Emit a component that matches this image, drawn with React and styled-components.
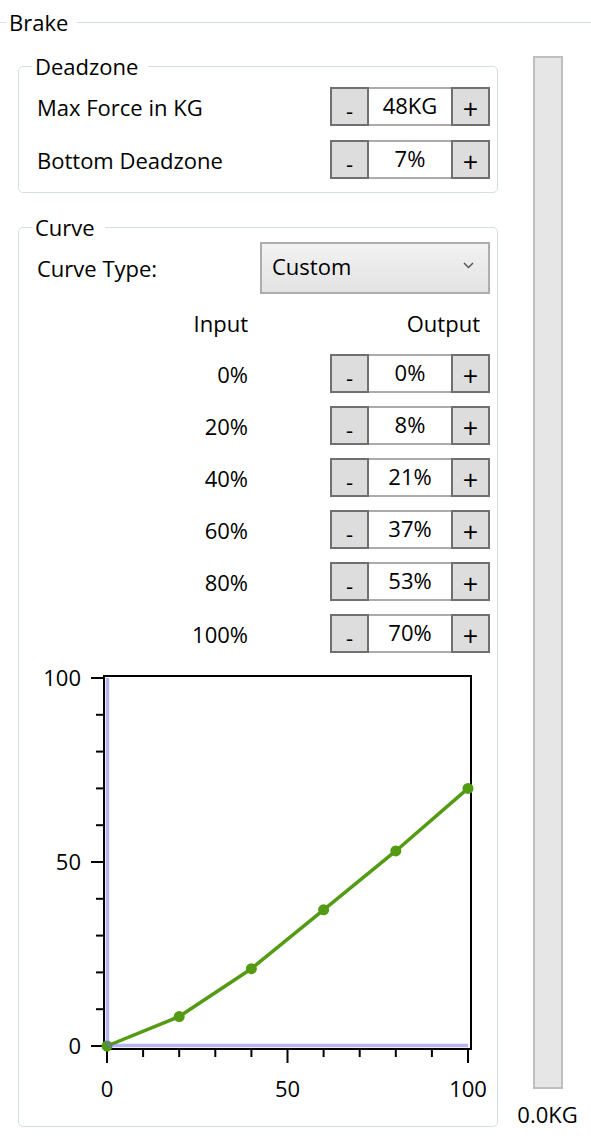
import React from "react";
import styled, { createGlobalStyle } from "styled-components";

const Global = createGlobalStyle`
  html, body { margin: 0; padding: 0; background: #ffffff; }
  body { font-family: "Open Sans", "Noto Sans", sans-serif; color: #000; }
`;

const Page = styled.div`
  width: 591px;
  height: 1143px;
  overflow: hidden;
  box-sizing: border-box;
  padding-top: 9px;
`;

const BrakeSet = styled.fieldset`
  margin: 0 0 0 -2px;
  padding: 18px 0 0 20px;
  border: none;
  border-top: 1.5px solid #d5dee3;
  min-inline-size: 0;
`;

const BrakeLegend = styled.legend`
  font-size: 22px;
  line-height: 26px;
  padding: 0 9px 0 3px;
  margin-left: -12px;
`;

const BrakeBody = styled.div`
  display: flex;
  align-items: stretch;
  gap: 20px;
`;

const LeftCol = styled.div`
  width: 480px;
  display: flex;
  flex-direction: column;
  gap: 21px;
`;

const Group = styled.fieldset`
  margin: 0;
  padding: ${(p) => p.$pad};
  border: 1.5px solid #d5dee3;
  border-radius: 5px;
  min-inline-size: 0;
  display: flex;
  flex-direction: column;
`;

const GroupLegend = styled.legend`
  font-size: 22px;
  line-height: 26px;
  padding: 0 10px 0 3px;
  margin-left: -5px;
`;

const Row = styled.div`
  display: flex;
  align-items: center;
  height: ${(p) => p.$h || 39}px;
  margin-top: ${(p) => p.$mt || 0}px;
`;

const Label = styled.div`
  font-size: 22px;
  line-height: 26px;
  flex: 1;
`;

const InputLabel = styled.div`
  font-size: 22px;
  line-height: 26px;
  width: 211px;
  text-align: right;
`;

const OutputLabel = styled.div`
  font-size: 22px;
  line-height: 26px;
  margin-left: auto;
  padding-right: 10px;
`;

const Stepper = styled.div`
  display: flex;
  margin-left: auto;
  height: 39px;
`;

const StepButton = styled.div`
  box-sizing: border-box;
  width: 39px;
  height: 39px;
  background: #dddddd;
  border: 2px solid #707070;
  font-size: ${(p) => (p.$plus ? 27 : 22)}px;
  line-height: 22px;
  display: flex;
  align-items: center;
  justify-content: center;
  padding-top: ${(p) => (p.$plus ? 5 : 7)}px;
`;

const StepValue = styled.div`
  box-sizing: border-box;
  width: 82px;
  height: 39px;
  background: #ffffff;
  border-top: 2px solid #ababab;
  border-bottom: 2px solid #ababab;
  font-size: 22px;
  line-height: 26px;
  display: flex;
  align-items: center;
  justify-content: center;
  padding-bottom: 4px;
`;

const Dropdown = styled.div`
  box-sizing: border-box;
  width: 230px;
  height: 52px;
  border: 2px solid #adadad;
  background: linear-gradient(#f2f2f2, #e3e3e3);
  display: flex;
  align-items: center;
  justify-content: space-between;
  padding: 0 14px 5px 10px;
  font-size: 22px;
  line-height: 26px;
`;

const ChartSvg = styled.svg`
  display: block;
  margin-top: 6px;
  width: 451px;
  height: 445px;
`;

const RightCol = styled.div`
  width: 59px;
  display: flex;
  flex-direction: column;
  align-items: center;
`;

const Bar = styled.div`
  box-sizing: border-box;
  flex: 1;
  width: 30px;
  margin-top: 3px;
  background: #e6e6e6;
  border: 2px solid #bebebe;
`;

const BarLabel = styled.div`
  margin-top: 12px;
  font-size: 22px;
  line-height: 26px;
  white-space: nowrap;
`;

const StepperControl = ({ value }) => (
  <Stepper>
    <StepButton>-</StepButton>
    <StepValue>{value}</StepValue>
    <StepButton $plus>+</StepButton>
  </Stepper>
);

const curve = [
  [0, "0%"],
  [20, "8%"],
  [40, "21%"],
  [60, "37%"],
  [80, "53%"],
  [100, "70%"],
];
const outVals = [0, 8, 21, 37, 53, 70];

const X0 = 108;
const XS = 3.61;
const Y0 = 1047;
const YS = 3.68;
const px = (v) => X0 + v * XS;
const py = (v) => Y0 - v * YS;

const Chart = () => {
  const ticks = [0, 10, 20, 30, 40, 50, 60, 70, 80, 90, 100];
  const pts = curve.map(([x], i) => [px(x), py(outVals[i])]);
  return (
    <ChartSvg viewBox="38 660 451 445">
      <rect x="105" y="677" width="367" height="373" fill="#fff" stroke="#000" strokeWidth="2" />
      {ticks.map((t) => (
        <line
          key={"y" + t}
          x1={t % 50 === 0 ? 92 : 97}
          x2="105"
          y1={py(t)}
          y2={py(t)}
          stroke="#000"
          strokeWidth="2"
        />
      ))}
      {ticks.map((t) => (
        <line
          key={"x" + t}
          y1="1050"
          y2={t % 50 === 0 ? 1064 : 1058}
          x1={px(t)}
          x2={px(t)}
          stroke="#000"
          strokeWidth="2"
        />
      ))}
      {[0, 50, 100].map((t) => (
        <text
          key={"yl" + t}
          x="82"
          y={py(t) + 8}
          textAnchor="end"
          fontSize="22"
          fontFamily="Open Sans, sans-serif"
        >
          {t}
        </text>
      ))}
      {[0, 50, 100].map((t) => (
        <text
          key={"xl" + t}
          x={px(t)}
          y="1098"
          textAnchor="middle"
          fontSize="22"
          fontFamily="Open Sans, sans-serif"
        >
          {t}
        </text>
      ))}
      <polyline
        points={pts.map((p) => p.join(",")).join(" ")}
        fill="none"
        stroke="#529b13"
        strokeWidth="3.5"
        strokeLinejoin="round"
      />
      {pts.map((p, i) => (
        <circle key={i} cx={p[0]} cy={p[1]} r="5.5" fill="#529b13" />
      ))}
      <line x1="108.5" y1="679" x2="108.5" y2="1047" stroke="#6b6be3" strokeOpacity="0.5" strokeWidth="3.5" />
      <line x1="110" y1="1046.5" x2="469" y2="1046.5" stroke="#6b6be3" strokeOpacity="0.5" strokeWidth="3.5" />
    </ChartSvg>
  );
};

const Chevron = () => (
  <svg width="11" height="7" viewBox="0 0 11 7">
    <polyline points="1,1 5.5,5.5 10,1" fill="none" stroke="#555" strokeWidth="1.5" />
  </svg>
);

export default function App() {
  return (
    <Page>
      <Global />
      <BrakeSet>
        <BrakeLegend>Brake</BrakeLegend>
        <BrakeBody>
          <LeftCol>
            <Group $pad="8px 7px 13px 18px">
              <GroupLegend>Deadzone</GroupLegend>
              <Row>
                <Label>Max Force in KG</Label>
                <StepperControl value="48KG" />
              </Row>
              <Row $mt={14}>
                <Label>Bottom Deadzone</Label>
                <StepperControl value="7%" />
              </Row>
            </Group>
            <Group $pad="2px 7px 22px 18px">
              <GroupLegend>Curve</GroupLegend>
              <Row $h={52}>
                <Label>Curve Type:</Label>
                <Dropdown>
                  <span>Custom</span>
                  <Chevron />
                </Dropdown>
              </Row>
              <Row $h={30} $mt={14}>
                <InputLabel>Input</InputLabel>
                <OutputLabel>Output</OutputLabel>
              </Row>
              {curve.map(([x, v], i) => (
                <Row key={x} $mt={i === 0 ? 16 : 13}>
                  <InputLabel>{x}%</InputLabel>
                  <StepperControl value={v} />
                </Row>
              ))}
              <Chart />
            </Group>
          </LeftCol>
          <RightCol>
            <Bar />
            <BarLabel>0.0KG</BarLabel>
          </RightCol>
        </BrakeBody>
      </BrakeSet>
    </Page>
  );
}
